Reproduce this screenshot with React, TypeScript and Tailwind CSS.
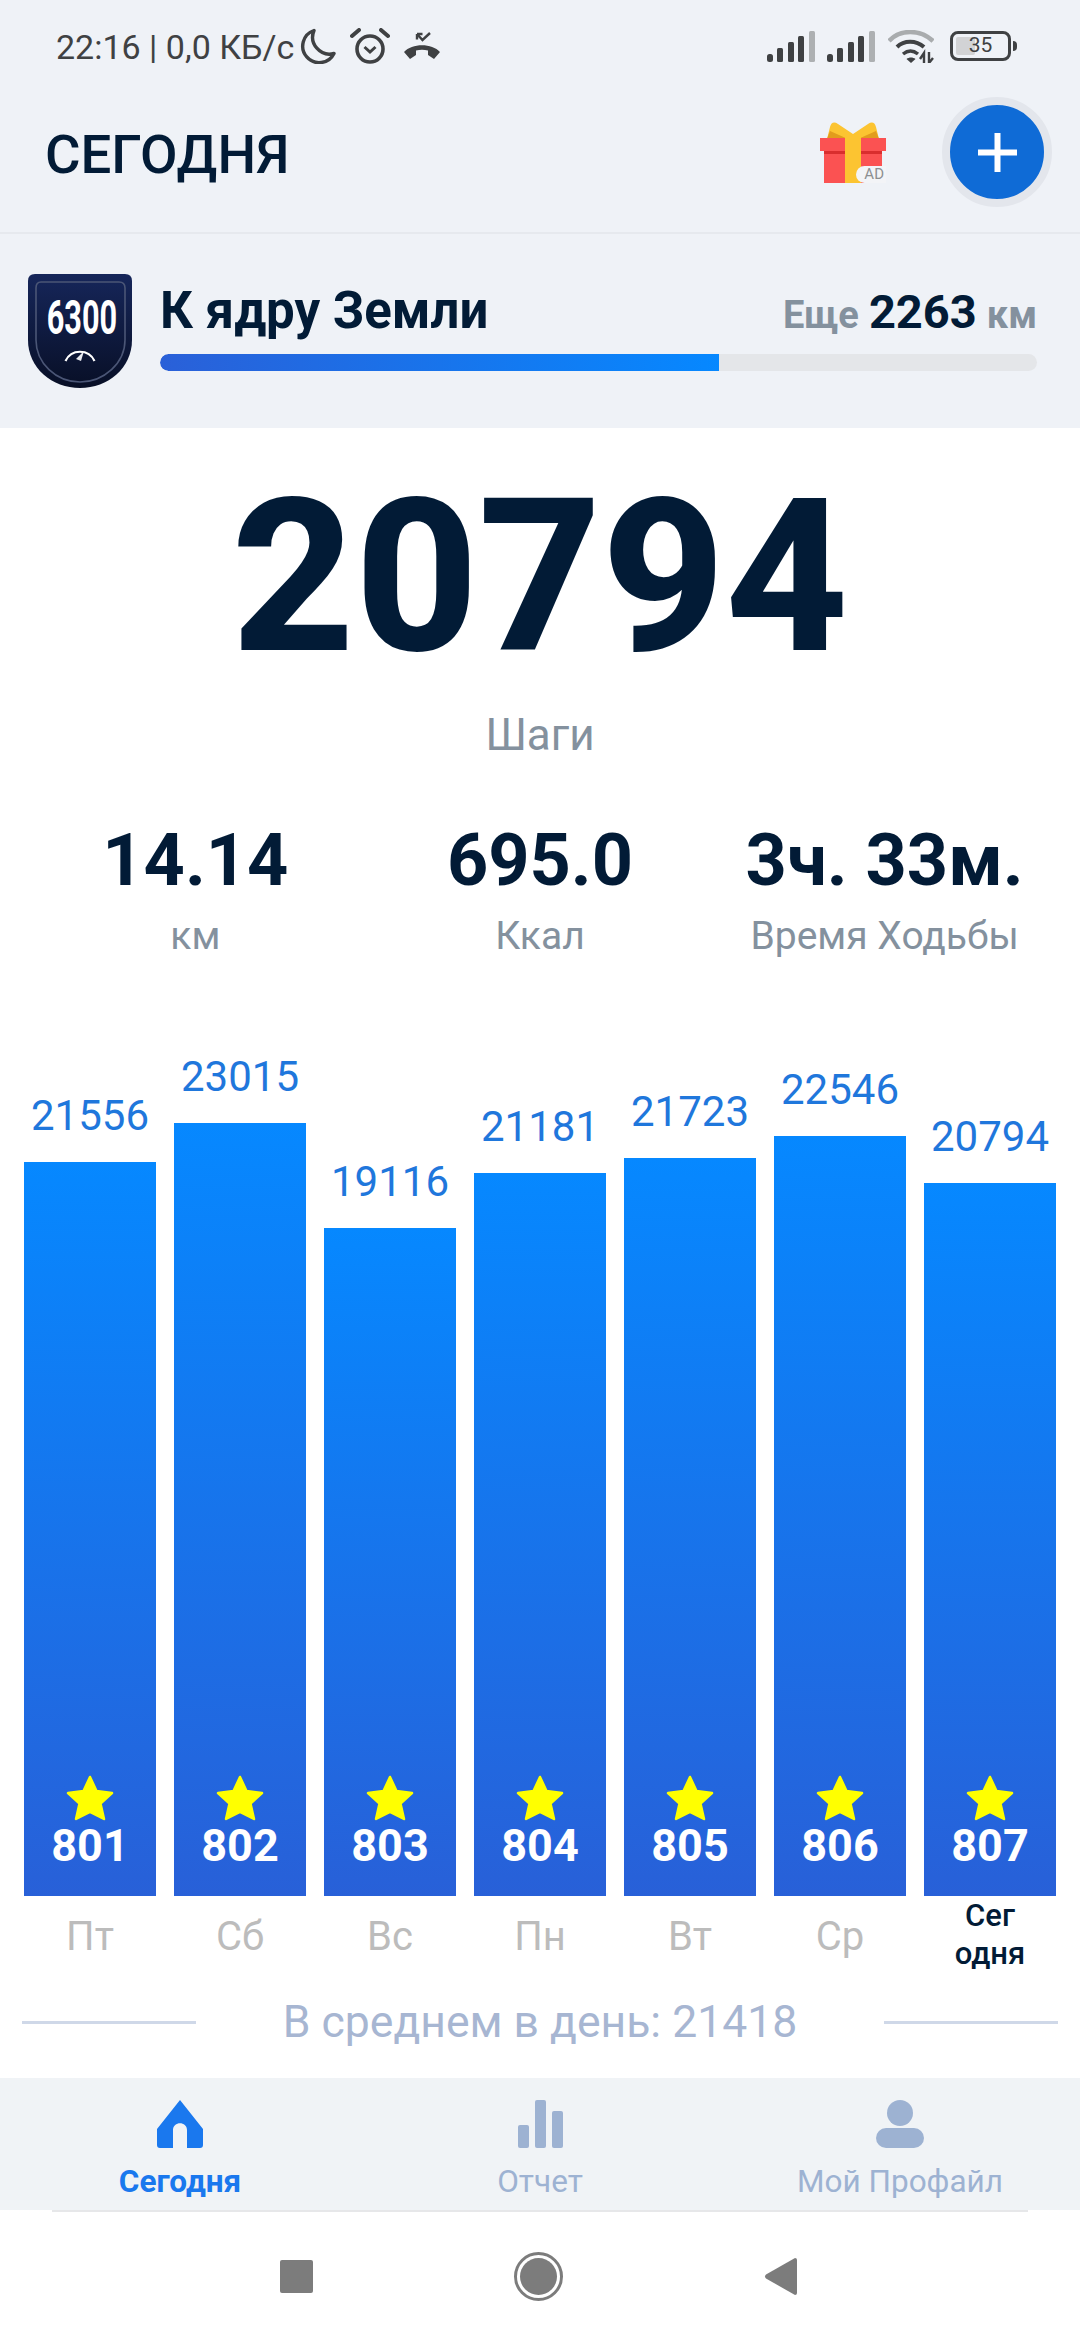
import React from 'react';

const bars = [
  { steps: 21556, height: 734, day: 'Пт', n: 801 },
  { steps: 23015, height: 773, day: 'Сб', n: 802 },
  { steps: 19116, height: 668, day: 'Вс', n: 803 },
  { steps: 21181, height: 723, day: 'Пн', n: 804 },
  { steps: 21723, height: 738, day: 'Вт', n: 805 },
  { steps: 22546, height: 760, day: 'Ср', n: 806 },
  { steps: 20794, height: 713, day: 'Сегодня', n: 807 },
];

const StatusIcons = () => (
  <div className="flex items-center ml-[6px] text-[#3f4143]">
    <svg width="36" height="36" viewBox="0 0 36 36" fill="none" stroke="currentColor" strokeWidth="3.4">
      <path d="M14 2.5 A16.5 16.5 0 1 0 34 25.5 A17 17 0 0 1 14 2.5 Z" strokeLinejoin="round" />
    </svg>
    <svg width="40" height="36" viewBox="0 0 40 36" fill="none" stroke="currentColor" strokeWidth="3.6" className="ml-[14px]">
      <circle cx="20" cy="21" r="13" />
      <path d="M14.5 19 l5.5 5 l5.5 -5" strokeWidth="3" />
      <path d="M2 8 L9 2 M38 8 L31 2" strokeWidth="4" strokeLinecap="round" />
    </svg>
    <svg width="36" height="28" viewBox="0 0 36 28" fill="currentColor" className="ml-[14px]">
      <path d="M0 20 C8 11 28 11 36 20 L30 27 L24 23 V18.5 C20 17.5 16 17.5 12 18.5 V23 L6 27 Z" />
      <path d="M13 2 L18.5 8 L26 1 M13 2 V7.5 M13 2 H18.5" fill="none" stroke="currentColor" strokeWidth="2.4" />
    </svg>
  </div>
);

const SignalBars = () => (
  <svg width="48" height="31" viewBox="0 0 48 31">
    <rect x="0" y="23" width="6" height="8" rx="2.5" fill="#3f4143" />
    <rect x="10" y="17" width="6" height="14" rx="1.5" fill="#3f4143" />
    <rect x="21" y="11" width="6" height="20" rx="1.5" fill="#3f4143" />
    <rect x="31" y="5" width="6" height="26" rx="1.5" fill="#3f4143" />
    <rect x="42" y="0" width="6" height="31" rx="1.5" fill="#adb0b2" />
  </svg>
);

const Wifi = () => (
  <svg width="46" height="33" viewBox="0 0 46 33" fill="none">
    <path d="M1 11 C12 -1 32 -1 45 11" stroke="#a9acae" strokeWidth="4.5" />
    <path d="M9 17 C16 10 28 10 36 17" stroke="#3f4143" strokeWidth="4" />
    <path d="M15 24 C20 20 25 20 30 24" stroke="#3f4143" strokeWidth="3.5" />
    <path d="M18.5 29 L23 33 L27.5 29 C25 27 21 27 18.5 29 Z" fill="#3f4143" />
    <path d="M36 33 V23 L32 29 M41 22 V33 L45 28" stroke="#3f4143" strokeWidth="2.4" />
  </svg>
);

const Gift = () => (
  <div className="relative w-[66px] h-[62px]">
    <svg width="66" height="62" viewBox="0 0 66 62">
      <path d="M7 18 L10 6 Q12 -1 18 3 L33 13 L48 3 Q54 -1 56 6 L59 18 Z" fill="#fcc431" />
      <path d="M7 18 L10 10 L28 18 Z M59 18 L56 10 L38 18 Z" fill="#e29c1c" />
      <rect x="0" y="17" width="66" height="13" fill="#fb5252" />
      <rect x="4" y="30" width="58" height="32" fill="#fb5252" />
      <rect x="4" y="30" width="58" height="3" fill="#d92e2e" />
      <rect x="25" y="16" width="16" height="46" fill="#fcc431" />
    </svg>
    <div className="absolute left-[36px] bottom-0 w-[30px] h-[17px] rounded-l-full bg-[#f3f4f7] text-[15px] leading-[17px] text-[#8d8f91] text-right pr-[2px]">AD</div>
  </div>
);

const Medal = () => (
  <div className="relative w-[104px] h-[114px] shrink-0">
    <svg width="104" height="114" viewBox="0 0 104 114" className="absolute inset-0">
      <defs>
        <linearGradient id="medal" x1="0" y1="0" x2="0" y2="1">
          <stop offset="0" stopColor="#16265a" />
          <stop offset="1" stopColor="#080f26" />
        </linearGradient>
      </defs>
      <path d="M7 0 H97 Q104 0 104 7 V66 C104 94 80 114 52 114 C24 114 0 94 0 66 V7 Q0 0 7 0 Z" fill="url(#medal)" />
      <path d="M13 8 H91 Q97 8 97 14 V66 C97 89 76 108 52 108 C28 108 8 89 8 66 V14 Q8 8 13 8 Z" fill="none" stroke="#4b5676" strokeWidth="1.6" />
      <path d="M37.5 87 A16 16 0 0 1 66.5 87" fill="none" stroke="#fff" strokeWidth="2.2" />
      <path d="M48 85 L56 77 L53 87 Z" fill="#e8eaf0" />
    </svg>
    <div className="absolute left-0 right-0 top-[20px] text-center font-bold text-white text-[48px] leading-[48px] scale-x-[0.64]">6300</div>
  </div>
);

const Stat = ({ value, label }: { value: string; label: string }) => (
  <div className="flex flex-col items-center">
    <div className="text-[72px] leading-[78px] font-bold text-[#021b36] whitespace-nowrap">{value}</div>
    <div className="mt-[15px] text-[39px] leading-[42px] text-[#84919e] whitespace-nowrap">{label}</div>
  </div>
);

const Star = () => (
  <svg width="48" height="46" viewBox="0 0 48 46" fill="#ffff00" stroke="#ffff00" strokeWidth="2.5" strokeLinejoin="round">
    <path d="M24 2 L30.5 16 L46 18 L34.5 28.5 L38 44 L24 37 L10 44 L13.5 28.5 L2 18 L17.5 16 Z" />
  </svg>
);

const Bar = ({ steps, height, n }: { steps: number; height: number; n: number }) => (
  <div className="w-[132px] flex flex-col items-center">
    <div className="text-[42px] leading-[50px] text-[#1f77dc] mb-[21px] whitespace-nowrap">{steps}</div>
    <div
      className="w-full flex flex-col items-center justify-end pb-[25px] bg-[linear-gradient(180deg,#0688ff_0%,#2860d8_100%)]"
      style={{ height }}
    >
      <Star />
      <div className="text-[45px] leading-[50px] font-bold text-white">{n}</div>
    </div>
  </div>
);

const NavItem = ({ label, active, children }: { label: string; active?: boolean; children: React.ReactNode }) => (
  <div className="w-[360px] flex flex-col items-center">
    <div className="h-[48px] mt-[22px] flex items-end">{children}</div>
    <div className={`mt-[15px] text-[31.5px] leading-[38px] ${active ? 'font-bold text-[#1a78ee]' : 'text-[#9db2d2]'}`}>{label}</div>
  </div>
);

export default function App() {
  return (
    <div className="w-[1080px] h-[2340px] overflow-hidden bg-white flex flex-col font-['Roboto',sans-serif]">
      <div className="h-[428px] bg-[#eff2f7] flex flex-col shrink-0">
        <div className="h-[92px] pl-[56px] pr-[69px] flex items-center justify-between shrink-0">
          <div className="flex items-center">
            <span className="text-[34px] text-[#3f4143] whitespace-nowrap mt-[2px]">22:16 | 0,0 КБ/с</span>
            <StatusIcons />
          </div>
          <div className="flex items-center">
            <SignalBars />
            <div className="ml-[12px]"><SignalBars /></div>
            <div className="ml-[13px]"><Wifi /></div>
            <div className="ml-[16px] w-[61px] h-[30px] border-[3px] border-[#3f4143] rounded-[8px] relative flex items-center justify-center text-[21px] text-[#3f4143]">
              <div className="absolute left-[3px] top-[3px] bottom-[3px] w-[19px] bg-[#d2d3d5] rounded-[2px]" />
              <span className="relative">35</span>
              <div className="absolute right-[-9px] top-[7px] w-[4px] h-[10px] rounded-r-full bg-[#3f4143]" />
            </div>
          </div>
        </div>
        <div className="h-[142px] pl-[45px] pr-[28px] pb-[20px] flex items-center justify-between border-b-[2px] border-[#e6e9ee] shrink-0">
          <div className="text-[54.5px] font-medium text-[#021b36] mt-[6px]">СЕГОДНЯ</div>
          <div className="flex items-center gap-[56px]">
            <Gift />
            <div className="w-[110px] h-[110px] rounded-full bg-[#0f6bd6] border-[8px] border-[#e3e6ec] flex items-center justify-center">
              <svg width="39" height="39" viewBox="0 0 39 39" fill="#fff">
                <rect x="16.5" y="0" width="6" height="39" />
                <rect x="0" y="16.5" width="39" height="6" />
              </svg>
            </div>
          </div>
        </div>
        <div className="flex-1 pl-[28px] pr-[43px] flex items-center gap-[28px]">
          <Medal />
          <div className="flex-1 flex flex-col mt-[-10px]">
            <div className="flex items-baseline justify-between h-[60px]">
              <div className="text-[51px] leading-[60px] font-bold text-[#021b36]">К ядру Земли</div>
              <div className="text-[38px] leading-[60px] font-bold text-[#84919e] flex items-baseline">
                Еще
                <span className="text-[47px] text-[#021b36] mx-[10px]">2263</span>
                км
              </div>
            </div>
            <div className="h-[17px] mt-[13px] rounded-full bg-[#e4e6e9] overflow-hidden">
              <div className="h-full w-[559px] rounded-l-full bg-[linear-gradient(90deg,#2a60d8,#0688ff)]" />
            </div>
          </div>
        </div>
      </div>

      <div className="flex-1 flex flex-col items-center">
        <div className="mt-[41px] text-[214px] leading-[216px] font-extrabold text-[#021b36]">20794</div>
        <div className="mt-[25px] text-[44px] leading-[50px] text-[#84919e]">Шаги</div>

        <div className="w-full mt-[62px] px-[23px] grid grid-cols-3">
          <Stat value="14.14" label="км" />
          <Stat value="695.0" label="Ккал" />
          <Stat value="3ч. 33м." label="Время Ходьбы" />
        </div>

        <div className="w-full px-[24px] mt-[95px] flex items-end justify-between">
          {bars.map((b) => (
            <Bar key={b.n} steps={b.steps} height={b.height} n={b.n} />
          ))}
        </div>

        <div className="w-full px-[24px] flex justify-between text-[40px] text-[#bcbcbc] h-[96px]">
          {bars.map((b) =>
            b.day === 'Сегодня' ? (
              <div key={b.n} className="w-[132px] mt-[1px] text-center text-[31px] leading-[38px] font-medium text-[#021b36]">
                Сег
                <br />
                одня
              </div>
            ) : (
              <div key={b.n} className="w-[132px] text-center mt-[18px] leading-[46px]">{b.day}</div>
            ),
          )}
        </div>

        <div className="w-full px-[22px] flex items-center justify-between">
          <div className="w-[174px] h-[3px] bg-[#cfd8e8]" />
          <div className="text-[44.5px] leading-[60px] text-[#a7b6d2]">В среднем в день: 21418</div>
          <div className="w-[174px] h-[3px] bg-[#cfd8e8]" />
        </div>
      </div>

      <div className="h-[132px] bg-[#f0f3f6] flex shrink-0">
        <NavItem label="Сегодня" active>
          <svg width="46" height="48" viewBox="0 0 46 48" fill="#1a78ee">
            <path d="M23 0 L46 29 V45 Q46 48 43 48 H30 V30 C30 21 16 21 16 30 V48 H3 Q0 48 0 45 V29 Z" />
          </svg>
        </NavItem>
        <NavItem label="Отчет">
          <svg width="45" height="48" viewBox="0 0 45 48" fill="#9db2d2">
            <rect x="0" y="25" width="11" height="23" rx="2" />
            <rect x="17" y="0" width="11" height="48" rx="2" />
            <rect x="34" y="11" width="11" height="37" rx="2" />
          </svg>
        </NavItem>
        <NavItem label="Мой Профайл">
          <svg width="48" height="48" viewBox="0 0 48 48" fill="#9db2d2">
            <ellipse cx="24" cy="13" rx="13" ry="13" />
            <rect x="0" y="28" width="48" height="20" rx="10" />
          </svg>
        </NavItem>
      </div>

      <div className="h-[130px] bg-white shrink-0 flex flex-col">
        <div className="mx-[52px] h-[2px] bg-[#e6e7e9]" />
        <div className="flex-1 flex items-center justify-between pl-[280px] pr-[283px]">
          <div className="w-[33px] h-[33px] rounded-[2px] bg-[#7c7c7c]" />
          <div className="w-[49px] h-[49px] rounded-full border-[3px] border-[#7c7c7c] p-[3px]">
            <div className="w-full h-full rounded-full bg-[#7c7c7c]" />
          </div>
          <svg width="33" height="37" viewBox="0 0 33 37" fill="#7c7c7c">
            <path d="M31 0 Q33 0 33 2 V35 Q33 37 31 37 L2 20.5 Q0 18.5 2 16.5 Z" />
          </svg>
        </div>
      </div>
    </div>
  );
}
